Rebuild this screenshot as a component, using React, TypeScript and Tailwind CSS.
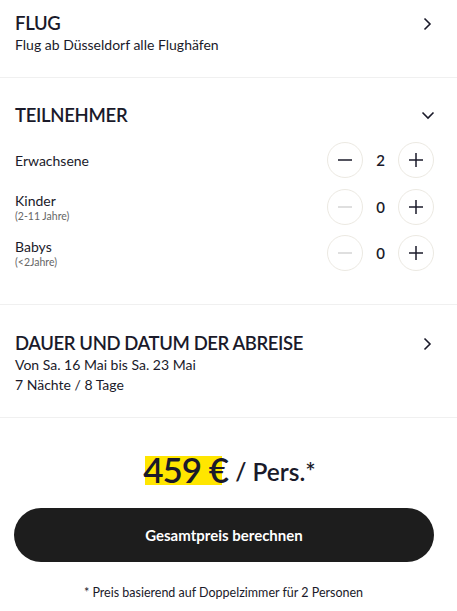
import React from "react";

const font = { fontFamily: "Lato, 'Noto Sans', sans-serif" };

function ChevronRight() {
  return (
    <svg width="10" height="14" viewBox="0 0 10 14" fill="none" stroke="#1a1a2a" strokeWidth="1.6">
      <path d="M2.5 1.5 L8 7 L2.5 12.5" />
    </svg>
  );
}
function ChevronDown() {
  return (
    <svg width="14" height="10" viewBox="0 0 14 10" fill="none" stroke="#1a1a2a" strokeWidth="1.6">
      <path d="M1.5 2.5 L7 8 L12.5 2.5" />
    </svg>
  );
}

function Circle({ kind, disabled }: { kind: "minus" | "plus"; disabled?: boolean }) {
  const c = disabled ? "#d4d4d4" : "#1a1a2a";
  return (
    <div className="w-[36px] h-[36px] rounded-full border border-[#ece9e2] flex items-center justify-center">
      <svg width="16" height="16" viewBox="0 0 16 16" stroke={c} strokeWidth="1.5">
        <path d="M1 8 H15" />
        {kind === "plus" && <path d="M8 1 V15" />}
      </svg>
    </div>
  );
}

function Counter({ value, minusDisabled }: { value: number; minusDisabled?: boolean }) {
  return (
    <div className="flex items-center">
      <Circle kind="minus" disabled={minusDisabled} />
      <div className="w-[35px] text-center text-[15px] font-semibold text-[#1a1a2a]">{value}</div>
      <Circle kind="plus" />
    </div>
  );
}

export default function App() {
  return (
    <div className="w-[457px] h-[611px] bg-white text-[#1a1a2a]" style={font}>
      {/* FLUG */}
      <div className="px-[15px] pt-[11px] h-[78px] border-b border-[#f0f0f0] flex justify-between">
        <div>
          <div className="text-[18.5px] font-semibold leading-[24px] tracking-[-0.3px]">FLUG</div>
          <div className="text-[14px] leading-[20px]">Flug ab Düsseldorf alle Flughäfen</div>
        </div>
        <div className="pt-[6px] pr-[10px]"><ChevronRight /></div>
      </div>

      {/* TEILNEHMER */}
      <div className="px-[15px] h-[227px] border-b border-[#f0f0f0]">
        <div className="pt-[25px] flex justify-between items-center h-[49px]">
          <div className="text-[18.5px] font-semibold leading-[24px] tracking-[-0.3px]">TEILNEHMER</div>
          <div className="pr-[7px]"><ChevronDown /></div>
        </div>
        <div className="mt-[15px] flex justify-between items-center h-[36px] pr-[8px]">
          <div className="text-[14px]">Erwachsene</div>
          <Counter value={2} />
        </div>
        <div className="mt-[11px] flex justify-between items-center h-[36px] pr-[8px]">
          <div>
            <div className="text-[14px] leading-[18px]">Kinder</div>
            <div className="text-[10.5px] leading-[13px] text-[#666]">(2-11 Jahre)</div>
          </div>
          <Counter value={0} minusDisabled />
        </div>
        <div className="mt-[10px] flex justify-between items-center h-[36px] pr-[8px]">
          <div>
            <div className="text-[14px] leading-[18px]">Babys</div>
            <div className="text-[10.5px] leading-[13px] text-[#666]">(&lt;2Jahre)</div>
          </div>
          <Counter value={0} minusDisabled />
        </div>
      </div>

      {/* DAUER */}
      <div className="px-[15px] pt-[26px] h-[113px] border-b border-[#f0f0f0] flex justify-between">
        <div>
          <div className="text-[18.5px] font-semibold leading-[24px] tracking-[-0.4px]">DAUER UND DATUM DER ABREISE</div>
          <div className="text-[14px] leading-[20px]">Von Sa. 16 Mai bis Sa. 23 Mai</div>
          <div className="text-[14px] leading-[20px]">7 Nächte / 8 Tage</div>
        </div>
        <div className="pt-[6px] pr-[10px]"><ChevronRight /></div>
      </div>

      {/* Price */}
      <div className="flex justify-center items-end pt-[24px] h-[70px] pl-[2px]">
        <span className="relative text-[35px] font-semibold leading-[38px] tracking-[-1px]">
          <span className="absolute left-[2px] right-[6px] top-[6px] bottom-[3px] bg-[#ffe600]" />
          <span className="relative">459 €</span>
        </span>
        <span className="text-[24.5px] font-semibold leading-[32px] ml-[7px]">/ Pers.*</span>
      </div>

      <div className="pl-[14px] pr-[23px] mt-[20px]">
        <button className="w-full h-[54px] rounded-full bg-[#1d1d1d] text-white text-[15px] font-bold">
          Gesamtpreis berechnen
        </button>
      </div>

      <div className="text-center text-[12.5px] mt-[22px] pr-[10px]">* Preis basierend auf Doppelzimmer für 2 Personen</div>
    </div>
  );
}
